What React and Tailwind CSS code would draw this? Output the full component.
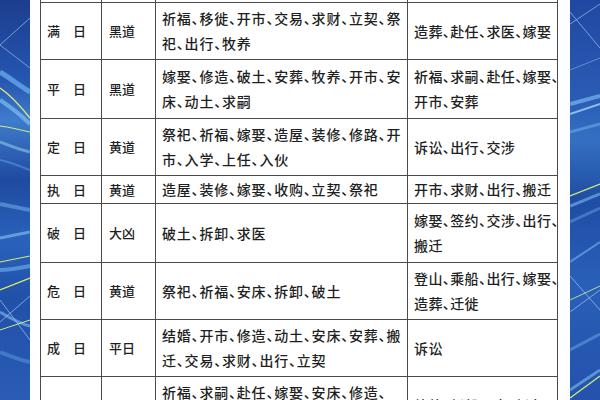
import React from "react"

// 建除十二神 宜忌表 (cropped view)
const rows = [
  { name: "", dao: "", yi: [""], ji: [""], h: "h-[57px]" },
  {
    name: "满　日",
    dao: "黑道",
    yi: ["祈福、移徙、开市、交易、求财、立契、祭", "祀、出行、牧养"],
    ji: ["造葬、赴任、求医、嫁娶"],
    h: "h-[57px]",
  },
  {
    name: "平　日",
    dao: "黑道",
    yi: ["嫁娶、修造、破土、安葬、牧养、开市、安", "床、动土、求嗣"],
    ji: ["祈福、求嗣、赴任、嫁娶、", "开市、安葬"],
    h: "h-[59px]",
  },
  {
    name: "定　日",
    dao: "黄道",
    yi: ["祭祀、祈福、嫁娶、造屋、装修、修路、开", "市、入学、上任、入伙"],
    ji: ["诉讼、出行、交涉"],
    h: "h-[57px]",
  },
  {
    name: "执　日",
    dao: "黄道",
    yi: ["造屋、装修、嫁娶、收购、立契、祭祀"],
    ji: ["开市、求财、出行、搬迁"],
    h: "h-[28px]",
  },
  {
    name: "破　日",
    dao: "大凶",
    yi: ["破土、拆卸、求医"],
    ji: ["嫁娶、签约、交涉、出行、", "搬迁"],
    h: "h-[59px]",
  },
  {
    name: "危　日",
    dao: "黄道",
    yi: ["祭祀、祈福、安床、拆卸、破土"],
    ji: ["登山、乘船、出行、嫁娶、", "造葬、迁徙"],
    h: "h-[57px]",
  },
  {
    name: "成　日",
    dao: "平日",
    yi: ["结婚、开市、修造、动土、安床、安葬、搬", "迁、交易、求财、出行、立契"],
    ji: ["诉讼"],
    h: "h-[57px]",
  },
  {
    name: "",
    dao: "",
    yi: ["祈福、求嗣、赴任、嫁娶、安床、修造、", "动土、求学、开市、交易、买卖、立契、", "纳财"],
    ji: ["放债、新船下水、新车下", "地、破土、安葬"],
    h: "h-[82px]",
  },
]

function LeftStrip() {
  return (
    <svg width="30" height="400" viewBox="0 0 30 400" className="block">
      <defs>
        <linearGradient id="lg" x1="0" y1="0" x2="0" y2="1">
          <stop offset="0" stopColor="#1d3d8e" />
          <stop offset="0.2" stopColor="#2556b0" />
          <stop offset="0.3" stopColor="#3f7ccc" />
          <stop offset="0.45" stopColor="#1f4aa0" />
          <stop offset="0.6" stopColor="#2a62bb" />
          <stop offset="0.75" stopColor="#2150a8" />
          <stop offset="1" stopColor="#2a5cb6" />
        </linearGradient>
      </defs>
      <rect width="30" height="400" fill="url(#lg)" />
      <path d="M30 18 L0 45 L30 68" stroke="#8fb0e6" strokeWidth="0.8" fill="none" />
      <path d="M0 72 C10 78 20 86 30 92" stroke="#6fb2ee" strokeWidth="5" fill="none" opacity="0.7" />
      <path d="M0 88 C12 96 22 108 30 118" stroke="#e6ee70" strokeWidth="1.3" fill="none" />
      <path d="M0 100 C12 108 22 116 30 124" stroke="#7cc0f2" strokeWidth="4" fill="none" opacity="0.7" />
      <path d="M0 126 C10 127 20 130 30 132" stroke="#d8ec8a" strokeWidth="1" fill="none" />
      <path d="M0 142 C10 146 20 150 30 152" stroke="#8cc6f0" strokeWidth="3" fill="none" opacity="0.6" />
      <path d="M0 160 C10 162 20 166 30 170" stroke="#5b94d8" strokeWidth="2" fill="none" opacity="0.6" />
      <path d="M0 204 C10 206 20 208 30 210" stroke="#6aaae6" strokeWidth="4" fill="none" opacity="0.6" />
      <path d="M0 238 C10 236 20 234 30 232" stroke="#8cc6f0" strokeWidth="3" fill="none" opacity="0.6" />
      <path d="M0 262 C10 260 20 258 30 256" stroke="#d7ea7a" strokeWidth="1.2" fill="none" />
      <path d="M0 270 C10 270 20 268 30 266" stroke="#72b4ee" strokeWidth="4" fill="none" opacity="0.6" />
      <path d="M0 290 L30 278" stroke="#e2ee6a" strokeWidth="1.3" fill="none" />
      <path d="M0 300 L30 340" stroke="#9ab8ea" strokeWidth="0.8" fill="none" />
      <path d="M0 322 L30 296" stroke="#9ab8ea" strokeWidth="0.8" fill="none" />
      <path d="M0 312 C10 318 20 324 30 326" stroke="#82c0ee" strokeWidth="3" fill="none" opacity="0.6" />
      <path d="M0 330 L30 320" stroke="#cfe884" strokeWidth="1" fill="none" />
      <path d="M0 352 C10 356 20 360 30 362" stroke="#5d9ad8" strokeWidth="4" fill="none" opacity="0.5" />
    </svg>
  )
}

function RightStrip() {
  return (
    <svg width="30" height="400" viewBox="0 0 30 400" className="block">
      <defs>
        <linearGradient id="rg" x1="0" y1="0" x2="0" y2="1">
          <stop offset="0" stopColor="#2148a0" />
          <stop offset="0.25" stopColor="#2a5cb6" />
          <stop offset="0.35" stopColor="#3470c2" />
          <stop offset="0.5" stopColor="#1f4ca4" />
          <stop offset="0.7" stopColor="#2a5fb8" />
          <stop offset="1" stopColor="#2452ac" />
        </linearGradient>
      </defs>
      <rect width="30" height="400" fill="url(#rg)" />
      <path d="M0 24 L30 4" stroke="#90b2e8" strokeWidth="0.8" fill="none" />
      <path d="M0 12 L30 48" stroke="#90b2e8" strokeWidth="0.8" fill="none" />
      <path d="M0 70 L30 58" stroke="#7ea6e0" strokeWidth="0.7" fill="none" />
      <path d="M0 104 L30 96" stroke="#78b8ee" strokeWidth="4" fill="none" opacity="0.7" />
      <path d="M0 114 L30 104" stroke="#a6d4f6" strokeWidth="2" fill="none" opacity="0.8" />
      <path d="M0 132 L30 124" stroke="#6aa8e6" strokeWidth="3" fill="none" opacity="0.6" />
      <path d="M0 196 L30 184" stroke="#d8ec74" strokeWidth="1.2" fill="none" />
      <path d="M0 206 L30 194" stroke="#7cbcf0" strokeWidth="3" fill="none" opacity="0.6" />
      <path d="M0 222 L30 208" stroke="#5f9ee0" strokeWidth="3" fill="none" opacity="0.5" />
      <path d="M0 262 L30 242" stroke="#79b8ee" strokeWidth="2" fill="none" opacity="0.6" />
      <path d="M0 276 L30 310" stroke="#9ab8ea" strokeWidth="0.8" fill="none" />
      <path d="M0 312 L30 290" stroke="#9ab8ea" strokeWidth="0.8" fill="none" />
      <path d="M0 300 L30 286" stroke="#a8e0a0" strokeWidth="1" fill="none" />
      <path d="M0 350 L30 334" stroke="#6aaae6" strokeWidth="3" fill="none" opacity="0.5" />
      <path d="M0 398 L30 376" stroke="#d6ee7a" strokeWidth="1.3" fill="none" />
      <path d="M0 390 L30 370" stroke="#7cc0f0" strokeWidth="3" fill="none" opacity="0.6" />
    </svg>
  )
}

function Lines({ lines, wide }) {
  return (
    <div
      className={
        "whitespace-nowrap leading-[25px] text-[14px] [font-feature-settings:'halt'] " +
        (wide ? "tracking-[0.8px]" : "tracking-[0.4px]")
      }
    >
      {lines.map((l, i) => (
        <div key={i}>{l}</div>
      ))}
    </div>
  )
}

export default function App() {
  return (
    <div className="flex h-[400px] w-[600px] overflow-hidden bg-white font-['Noto_Sans_CJK_SC','Noto_Sans',sans-serif] text-[#1f1f1f]">
      <div className="w-[30px] shrink-0">
        <LeftStrip />
      </div>
      <div className="flex-1 bg-white pl-[10px]">
        <table className="-mt-[55px] w-[517px] table-fixed border-collapse font-medium">
          <colgroup>
            <col className="w-[61px]" />
            <col className="w-[54px]" />
            <col className="w-[252px]" />
            <col className="w-[150px]" />
          </colgroup>
          <tbody>
            {rows.map((r, i) => (
              <tr key={i}>
                <td className={"border border-[#4a4a4a] pl-[6px] align-middle text-[13px] " + r.h}>{r.name}</td>
                <td className="border border-[#4a4a4a] pl-[7px] align-middle text-[13px]">{r.dao}</td>
                <td className="border border-[#4a4a4a] pl-[6px] align-middle">
                  <Lines lines={r.yi} wide />
                </td>
                <td className="border border-[#4a4a4a] pl-[6px] align-middle">
                  <Lines lines={r.ji} />
                </td>
              </tr>
            ))}
          </tbody>
        </table>
      </div>
      <div className="w-[30px] shrink-0">
        <RightStrip />
      </div>
    </div>
  )
}
